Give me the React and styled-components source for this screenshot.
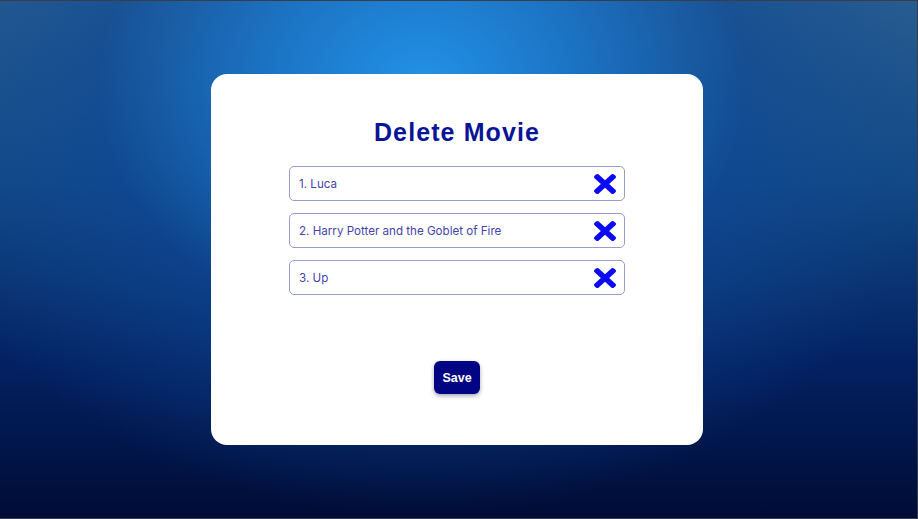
import React from 'react'
import styled, { createGlobalStyle } from 'styled-components'

const GlobalStyle = createGlobalStyle`
  html, body {
    margin: 0;
    padding: 0;
  }
  body {
    font-family: Inter, 'Liberation Sans', sans-serif;
  }
  * {
    box-sizing: border-box;
  }
`

const Screen = styled.div`
  width: 918px;
  height: 519px;
  display: flex;
  align-items: center;
  justify-content: center;
  padding-right: 3px;
  border: 1px solid #3a3d44;
  border-left: none;
  background:
    radial-gradient(ellipse 540px 430px at 46% 16%, rgba(34, 146, 230, 1) 0%, rgba(26, 118, 204, 0.85) 30%, rgba(14, 72, 150, 0.6) 60%, rgba(4, 30, 90, 0) 100%),
    linear-gradient(180deg, #2a5f8e 0%, #124985 35%, #032162 70%, #000c36 100%);
  overflow: hidden;
`

const Card = styled.div`
  width: 492px;
  height: 371px;
  background: #ffffff;
  border-radius: 16px;
  display: flex;
  flex-direction: column;
  align-items: center;
  padding-top: 43px;
`

const Title = styled.h1`
  margin: 0;
  font-family: 'Liberation Sans', Arial, sans-serif;
  font-weight: 700;
  font-size: 25px;
  line-height: 30px;
  letter-spacing: 1.1px;
  color: #0a1496;
`

const List = styled.ul`
  list-style: none;
  margin: 19px 0 0;
  padding: 0;
  display: flex;
  flex-direction: column;
  gap: 12px;
`

const Row = styled.li`
  width: 336px;
  height: 35px;
  border: 1px solid #9a9acc;
  border-radius: 5px;
  display: flex;
  align-items: center;
  justify-content: space-between;
  padding: 0 8px 0 9px;
`

const Name = styled.span`
  font-family: Inter, 'Liberation Sans', sans-serif;
  font-size: 11.6px;
  color: #4444a8;
`

const RemoveButton = styled.button`
  border: none;
  background: none;
  padding: 0;
  display: flex;
  cursor: pointer;
  color: #0a0af5;
`

const SaveButton = styled.button`
  margin-top: 66px;
  height: 33px;
  padding: 0 8px;
  border: none;
  border-radius: 6px;
  background: #010583;
  color: #ffffff;
  font-family: 'Liberation Sans', Arial, sans-serif;
  font-weight: 700;
  font-size: 12.5px;
  box-shadow: 0 2px 4px rgba(0, 0, 40, 0.35);
  cursor: pointer;
`

function CrossIcon () {
  return (
    <svg width='22' height='20' viewBox='0 80 352 352' preserveAspectRatio='none' fill='currentColor'>
      <path d='M242.72 256l100.07-100.07c12.28-12.280 12.28-32.19 0-44.48l-22.24-22.24c-12.28-12.28-32.19-12.28-44.48 0L176 189.28 75.93 89.21c-12.28-12.28-32.19-12.28-44.48 0L9.21 111.45c-12.28 12.28-12.28 32.19 0 44.48L109.28 256 9.21 356.07c-12.28 12.28-12.28 32.19 0 44.48l22.24 22.24c12.28 12.28 32.2 12.28 44.48 0L176 322.72l100.07 100.07c12.28 12.28 32.2 12.28 44.48 0l22.24-22.24c12.28-12.28 12.28-32.19 0-44.48L242.72 256z' />
    </svg>
  )
}

const movies = ['Luca', 'Harry Potter and the Goblet of Fire', 'Up']

export default function App () {
  return (
    <>
      <GlobalStyle />
      <Screen>
        <Card>
          <Title>Delete Movie</Title>
          <List>
            {movies.map((movie, i) =>
              <Row key={movie}>
                <Name>{i + 1}. {movie}</Name>
                <RemoveButton aria-label={`Delete ${movie}`}>
                  <CrossIcon />
                </RemoveButton>
              </Row>
            )}
          </List>
          <SaveButton>Save</SaveButton>
        </Card>
      </Screen>
    </>
  )
}
